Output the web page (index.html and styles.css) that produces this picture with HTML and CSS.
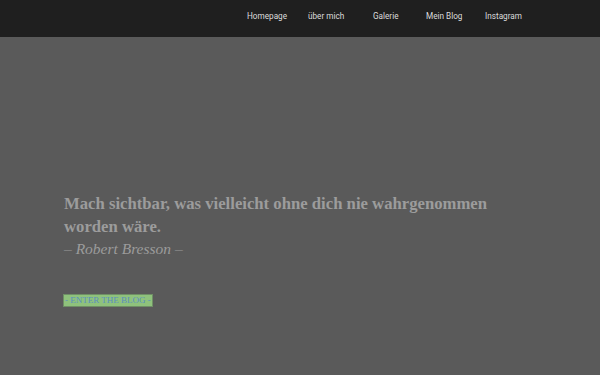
FILE: index.html
```html
<!DOCTYPE html>
<html lang="de">
<head>
<meta charset="utf-8">
<link rel="stylesheet" href="styles.css">
</head>
<body>
<header class="topbar">
  <nav class="nav">
    <a class="nav-link" href="#">Homepage</a>
    <a class="nav-link" href="#">über mich</a>
    <a class="nav-link" href="#">Galerie</a>
    <a class="nav-link" href="#">Mein Blog</a>
    <a class="nav-link" href="#">Instagram</a>
  </nav>
</header>
<main class="hero">
  <blockquote class="quote">
    <p class="quote-text">Mach sichtbar, was vielleicht ohne dich nie wahrgenommen worden wäre.</p>
    <p class="quote-author">– Robert Bresson –</p>
  </blockquote>
  <a class="enter" href="#">- ENTER THE BLOG -</a>
</main>
</body>
</html>
```
FILE: styles.css
```css
html, body {
  margin: 0;
  padding: 0;
}
body {
  width: 600px;
  height: 375px;
  background: #5a5a5a;
  overflow: hidden;
}
.topbar {
  height: 37px;
  background: #1f1f1f;
  display: flex;
  align-items: flex-start;
}
.nav {
  display: flex;
  padding-left: 247px;
  padding-top: 11px;
}
.nav-link {
  font-family: Roboto, "Liberation Sans", sans-serif;
  font-size: 8.2px;
  line-height: 10px;
  color: #dcdcdc;
  text-decoration: none;
}
.nav-link:nth-child(1) { width: 61px; }
.nav-link:nth-child(2) { width: 65px; }
.nav-link:nth-child(3) { width: 53px; }
.nav-link:nth-child(4) { width: 59px; }
.hero {
  padding: 155px 0 0 64px;
}
.quote {
  margin: 0;
  width: 440px;
}
.quote-text {
  margin: 0;
  font-family: "Liberation Serif", serif;
  font-weight: bold;
  font-size: 16.7px;
  line-height: 23px;
  color: #9c9c9c;
}
.quote-author {
  margin: 0;
  font-family: "Liberation Serif", serif;
  font-style: italic;
  font-size: 15.5px;
  line-height: 22px;
  color: #9c9c9c;
}
.enter {
  display: inline-block;
  margin-top: 34px;
  margin-left: -1px;
  background: #8fc27c;
  border: 1px solid #6f8f66;
  color: #5b8fbf;
  font-family: "Liberation Serif", serif;
  font-size: 9px;
  line-height: 11px;
  padding: 0 1px;
  text-decoration: none;
}
```
